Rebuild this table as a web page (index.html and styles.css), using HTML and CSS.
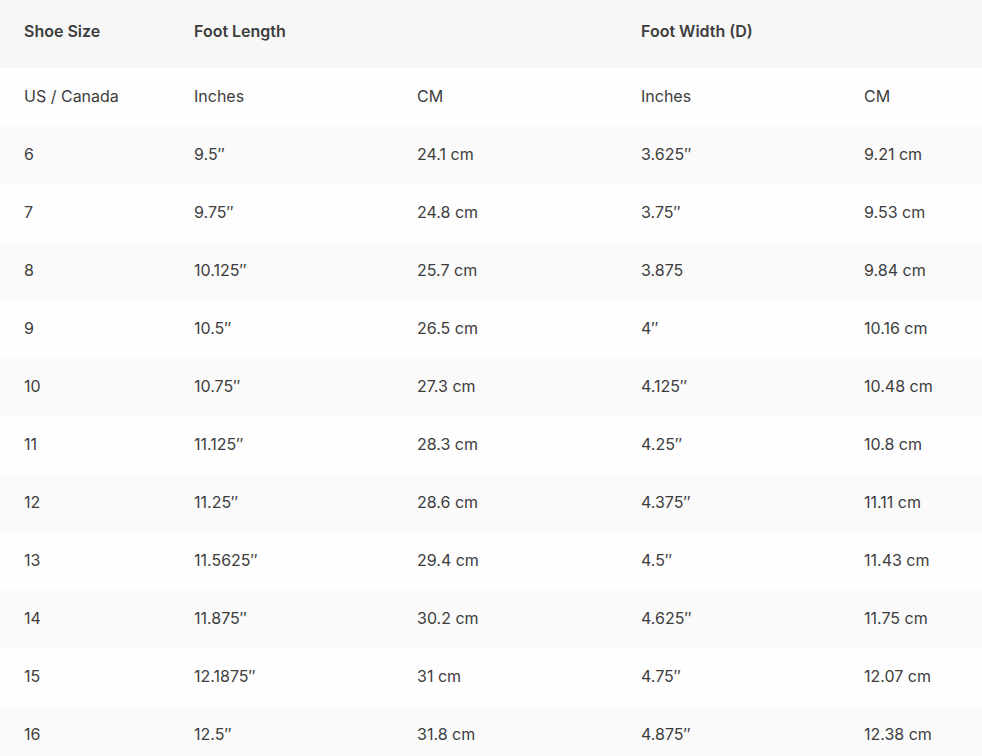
FILE: index.html
```html
<!DOCTYPE html>
<html>
<head>
<meta charset="utf-8">
<link rel="stylesheet" href="styles.css">
</head>
<body>
<table class="size-table">
  <colgroup>
    <col class="c1"><col class="c2"><col class="c3"><col class="c4"><col class="c5">
  </colgroup>
  <thead>
    <tr class="head">
      <th>Shoe Size</th>
      <th colspan="2">Foot Length</th>
      <th colspan="2">Foot Width (D)</th>
    </tr>
  </thead>
  <tbody>
    <tr class="light"><td>US / Canada</td><td>Inches</td><td>CM</td><td>Inches</td><td>CM</td></tr>
    <tr class="shade"><td>6</td><td>9.5″</td><td>24.1 cm</td><td>3.625″</td><td>9.21 cm</td></tr>
    <tr class="light"><td>7</td><td>9.75″</td><td>24.8 cm</td><td>3.75″</td><td>9.53 cm</td></tr>
    <tr class="shade"><td>8</td><td>10.125″</td><td>25.7 cm</td><td>3.875</td><td>9.84 cm</td></tr>
    <tr class="light"><td>9</td><td>10.5″</td><td>26.5 cm</td><td>4″</td><td>10.16 cm</td></tr>
    <tr class="shade"><td>10</td><td>10.75″</td><td>27.3 cm</td><td>4.125″</td><td>10.48 cm</td></tr>
    <tr class="light"><td>11</td><td>11.125″</td><td>28.3 cm</td><td>4.25″</td><td>10.8 cm</td></tr>
    <tr class="shade"><td>12</td><td>11.25″</td><td>28.6 cm</td><td>4.375″</td><td>11.11 cm</td></tr>
    <tr class="light"><td>13</td><td>11.5625″</td><td>29.4 cm</td><td>4.5″</td><td>11.43 cm</td></tr>
    <tr class="shade"><td>14</td><td>11.875″</td><td>30.2 cm</td><td>4.625″</td><td>11.75 cm</td></tr>
    <tr class="light"><td>15</td><td>12.1875″</td><td>31 cm</td><td>4.75″</td><td>12.07 cm</td></tr>
    <tr class="shade"><td>16</td><td>12.5″</td><td>31.8 cm</td><td>4.875″</td><td>12.38 cm</td></tr>
  </tbody>
</table>
</body>
</html>
```
FILE: styles.css
```css
html, body {
  margin: 0;
  padding: 0;
  background: #ffffff;
}
body {
  font-family: Inter, "Noto Sans", sans-serif;
  color: #3d3d3d;
  font-size: 16px;
}
.size-table {
  width: 982px;
  border-collapse: collapse;
  table-layout: fixed;
}
.c1 { width: 170px; }
.c2 { width: 223px; }
.c3 { width: 224px; }
.c4 { width: 223px; }
.c5 { width: 142px; }
th, td {
  text-align: left;
  padding: 0 0 0 24px;
  line-height: 22px;
  vertical-align: middle;
  white-space: nowrap;
}
.head th {
  background: #f7f7f7;
  font-weight: 600;
  height: 68px;
  padding-top: 0;
  padding-bottom: 6px;
  box-sizing: border-box;
}
td {
  height: 58px;
  box-sizing: border-box;
  padding-bottom: 2px;
}
.shade td { background: #fafafa; }
.light td { background: #fefefe; }
```
